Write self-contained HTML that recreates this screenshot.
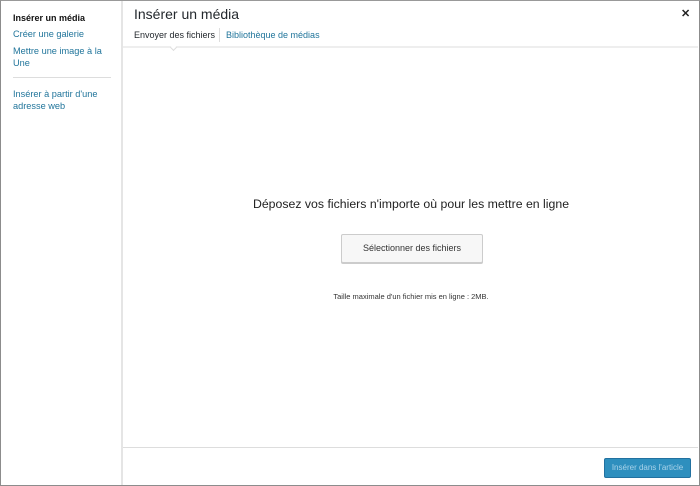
<!DOCTYPE html><html><head><style>
body{margin:0;width:700px;height:486px;overflow:hidden;font-family:"Liberation Sans",sans-serif;background:#fff;position:relative}
.frame{position:absolute;left:0;top:0;width:698px;height:484px;border:1px solid #8c8c8c;border-top-color:#999}
.side{position:absolute;left:1px;top:1px;width:120px;height:484px;background:#fff;border-right:2px solid #e5e5e5}
.a{position:absolute;font-size:9.2px;color:#21759b}
h1{position:absolute;left:134px;top:6px;margin:0;font-weight:normal;font-size:14px;color:#23282d}
.x{position:absolute;left:681px;top:7px;font-size:11px;font-weight:bold;color:#222}
.hl{position:absolute;left:123px;top:46px;width:575px;height:2px;background:#eee}
.fl{position:absolute;left:123px;top:447px;width:575px;height:1px;background:#ddd}
.t{position:absolute;font-size:9px}
.btn{position:absolute;left:341px;top:234px;width:140px;height:27px;border:1px solid #ccc;border-radius:2px;background:#f7f7f7;font-size:9px;color:#333;text-align:center;line-height:27px;box-shadow:0 1px 0 #ccc}
.ins{position:absolute;left:604px;top:458px;width:85px;height:18px;background:#2e8fbe;border:1px solid #2271a0;border-radius:2px;color:#a9d3ea;font-size:8px;text-align:center;line-height:18px}
</style></head><body>
<div class="frame"></div>
<div class="side"></div>
<div class="t" style="left:13px;top:13px;font-weight:bold;color:#111;font-size:9px">Insérer un média</div>
<div class="a" style="left:13px;top:29px">Créer une galerie</div>
<div class="a" style="left:13px;top:45px;line-height:12px;width:100px">Mettre une image à la Une</div>
<div style="position:absolute;left:13px;top:77px;width:98px;height:1px;background:#ddd"></div>
<div class="a" style="left:13px;top:88px;line-height:12px;width:100px">Insérer à partir d'une adresse web</div>
<h1>Insérer un média</h1>
<div class="x">✕</div>
<div class="t" style="left:134px;top:30px;color:#23282d">Envoyer des fichiers</div>
<div style="position:absolute;left:219px;top:28px;width:1px;height:14px;background:#ddd"></div>
<div class="t" style="left:226px;top:30px;color:#21759b">Bibliothèque de médias</div>
<div class="hl"></div>
<div style="position:absolute;left:171px;top:45px;width:4px;height:4px;background:#fff;border-right:1px solid #ddd;border-bottom:1px solid #ddd;transform:rotate(45deg)"></div>
<div style="position:absolute;left:124px;top:197px;width:574px;text-align:center;font-size:12.3px;color:#222">Déposez vos fichiers n'importe où pour les mettre en ligne</div>
<div class="btn">Sélectionner des fichiers</div>
<div style="position:absolute;left:124px;top:292px;width:574px;text-align:center;font-size:7.5px;color:#333">Taille maximale d'un fichier mis en ligne : 2MB.</div>
<div class="fl"></div>
<div class="ins">Insérer dans l'article</div>
</body></html>
